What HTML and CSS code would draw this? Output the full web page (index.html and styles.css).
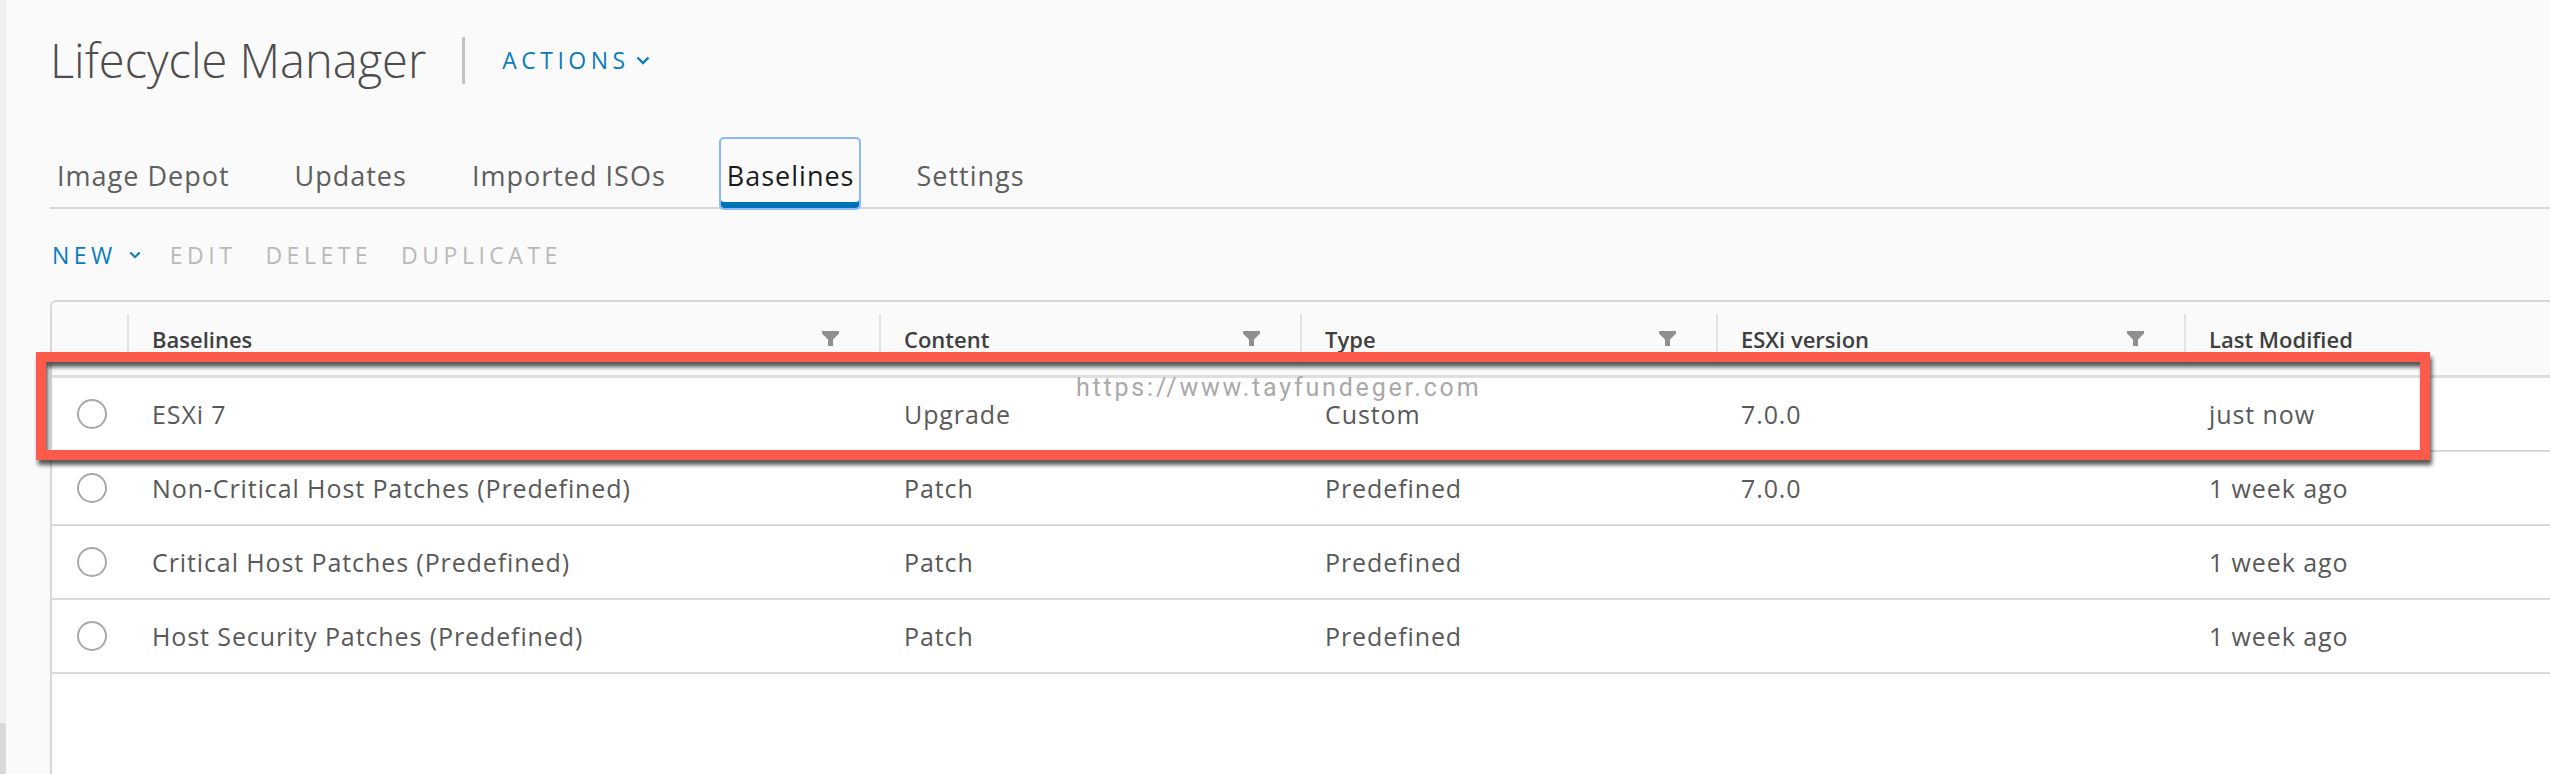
FILE: index.html
```html
<!DOCTYPE html>
<html lang="en">
<head>
<meta charset="utf-8">
<title>Lifecycle Manager</title>
<link rel="stylesheet" href="styles.css">
</head>
<body>
<div class="app">
  <div class="strip"><div class="strip-thumb"></div></div>
  <div class="main">
    <header class="page-header">
      <h1 class="title">Lifecycle Manager</h1>
      <span class="divider"></span>
      <span class="actions"><span>ACTIONS</span><svg class="chev" viewBox="0 0 14 9" width="14" height="9"><path d="M1.5 1.5 L7 7 L12.5 1.5" fill="none" stroke="currentColor" stroke-width="2.4"/></svg></span>
    </header>
    <nav class="tabs">
      <span class="tab">Image Depot</span>
      <span class="tab">Updates</span>
      <span class="tab">Imported ISOs</span>
      <span class="tab active">Baselines</span>
      <span class="tab">Settings</span>
    </nav>
    <div class="toolbar">
      <span class="btn primary"><span>NEW</span><svg class="chev small" viewBox="0 0 14 9" width="12" height="8"><path d="M1.5 1.5 L7 7 L12.5 1.5" fill="none" stroke="currentColor" stroke-width="2.4"/></svg></span>
      <span class="btn disabled">EDIT</span>
      <span class="btn disabled">DELETE</span>
      <span class="btn disabled">DUPLICATE</span>
    </div>
    <div class="grid">
      <div class="grid-head">
        <div class="hcell select"></div>
        <div class="hcell"><span>Baselines</span><svg class="filter" viewBox="0 0 17 15" width="17" height="15"><path d="M0 0 H17 V2.5 L11 8.5 V15 H6 V8.5 L0 2.5 Z"/></svg></div>
        <div class="hcell"><span>Content</span><svg class="filter" viewBox="0 0 17 15" width="17" height="15"><path d="M0 0 H17 V2.5 L11 8.5 V15 H6 V8.5 L0 2.5 Z"/></svg></div>
        <div class="hcell"><span>Type</span><svg class="filter" viewBox="0 0 17 15" width="17" height="15"><path d="M0 0 H17 V2.5 L11 8.5 V15 H6 V8.5 L0 2.5 Z"/></svg></div>
        <div class="hcell"><span>ESXi version</span><svg class="filter" viewBox="0 0 17 15" width="17" height="15"><path d="M0 0 H17 V2.5 L11 8.5 V15 H6 V8.5 L0 2.5 Z"/></svg></div>
        <div class="hcell"><span>Last Modified</span></div>
      </div>
      <div class="grid-row">
        <div class="cell select"><span class="radio"></span></div>
        <div class="cell">ESXi 7</div>
        <div class="cell">Upgrade</div>
        <div class="cell">Custom</div>
        <div class="cell">7.0.0</div>
        <div class="cell">just now</div>
      </div>
      <div class="grid-row">
        <div class="cell select"><span class="radio"></span></div>
        <div class="cell">Non-Critical Host Patches (Predefined)</div>
        <div class="cell">Patch</div>
        <div class="cell">Predefined</div>
        <div class="cell">7.0.0</div>
        <div class="cell">1 week ago</div>
      </div>
      <div class="grid-row">
        <div class="cell select"><span class="radio"></span></div>
        <div class="cell">Critical Host Patches (Predefined)</div>
        <div class="cell">Patch</div>
        <div class="cell">Predefined</div>
        <div class="cell"></div>
        <div class="cell">1 week ago</div>
      </div>
      <div class="grid-row">
        <div class="cell select"><span class="radio"></span></div>
        <div class="cell">Host Security Patches (Predefined)</div>
        <div class="cell">Patch</div>
        <div class="cell">Predefined</div>
        <div class="cell"></div>
        <div class="cell">1 week ago</div>
      </div>
    </div>
  </div>
  <div class="highlight"></div>
  <div class="watermark">https://www.tayfundeger.com</div>
</div>
</body>
</html>
```

FILE: styles.css
```css
* { box-sizing: border-box; }
html, body { margin: 0; padding: 0; }
body {
  background: #fafafa;
  font-family: "Open Sans", "Liberation Sans", sans-serif;
  color: #565656;
}
.app {
  position: relative;
  display: flex;
  height: 774px;
  overflow: hidden;
}
.strip {
  width: 6px;
  flex: none;
  background: #efefef;
  display: flex;
  flex-direction: column;
  justify-content: flex-end;
}
.strip-thumb { height: 51px; background: #d9d9d9; }
.main {
  flex: 1;
  display: flex;
  flex-direction: column;
  padding-left: 44px;
  min-width: 0;
}
.page-header {
  height: 120px;
  display: flex;
  align-items: center;
  flex: none;
}
.title {
  margin: 0;
  font-size: 47px;
  font-weight: 300;
  line-height: 1;
  color: #4d4d4d;
}
.divider {
  width: 3px;
  height: 47px;
  background: #c2c2c2;
  margin-left: 36px;
  margin-right: 37px;
}
.actions {
  display: flex;
  align-items: center;
  color: #0b7bbd;
  font-size: 23px;
  font-weight: 500;
  letter-spacing: 4.5px;
}
.chev { margin-left: 6px; }
.chev.small { margin-left: 12px; }
.tabs {
  margin-top: 17px;
  height: 72px;
  border-bottom: 2px solid #d6d6d6;
  display: flex;
  align-items: flex-start;
  gap: 45px;
  flex: none;
}
.tab {
  height: 70px;
  display: flex;
  align-items: center;
  padding: 6px 10px 0;
  font-size: 27px;
  letter-spacing: 1px;
  color: #5e5e5e;
}
.tab:first-child { padding-left: 7px; }
.tab.active {
  height: 73px;
  border: 2px solid #8cb9f5;
  border-radius: 5px;
  box-shadow: inset 0 -6px 0 #0072b8;
  color: #1b1b1b;
  position: relative;
  z-index: 1;
  padding: 4px 5px 0 6px;
  margin-left: -2px;
}
.toolbar {
  height: 91px;
  display: flex;
  align-items: center;
  gap: 29px;
  flex: none;
  padding-left: 2px;
}
.btn {
  display: flex;
  align-items: center;
  font-size: 23px;
  font-weight: 500;
  letter-spacing: 4.5px;
}
.btn.primary { color: #0b7bbd; }
.btn.disabled { color: #b9b9b9; }
.grid {
  flex: 1;
  background: #ffffff;
  border-top: 2px solid #d7d7d7;
  border-left: 2px solid #d7d7d7;
  border-top-left-radius: 6px;
  margin-right: -10px;
}
.grid-head, .grid-row {
  display: grid;
  grid-template-columns: 75px 752px 421px 416px 468px 1fr;
}
.grid-head {
  height: 76px;
  background: #fafafa;
  border-bottom: 3px solid #dedede;
  align-items: center;
  border-top-left-radius: 5px;
}
.hcell {
  height: 49px;
  display: flex;
  align-items: center;
  padding-left: 23px;
  border-left: 2px solid #e2e2e2;
  font-size: 22px;
  font-weight: 600;
  color: #3f3f3f;
}
.hcell.select { border-left: none; }
.filter {
  margin-left: auto;
  margin-right: 40px;
  fill: #8f8f8f;
}
.grid-row {
  height: 74px;
  border-bottom: 2px solid #d9d9d9;
  align-items: center;
}
.cell {
  padding-left: 25px;
  font-size: 25px;
  letter-spacing: 0.9px;
  color: #595959;
  white-space: nowrap;
}
.cell.select { padding-left: 25px; display: flex; }
.radio {
  width: 30px;
  height: 30px;
  border: 2px solid #a8a8a8;
  border-radius: 50%;
  background: #fff;
}
.highlight {
  position: absolute;
  left: 36px;
  top: 352px;
  width: 2394px;
  height: 108px;
  border: 10px solid #fd5a4b;
  filter: drop-shadow(2px 5px 2px rgba(0, 0, 0, 0.65));
  z-index: 5;
}
.watermark {
  position: absolute;
  left: 1076px;
  top: 373px;
  font-family: Roboto, "Open Sans", sans-serif;
  font-size: 25px;
  letter-spacing: 2.8px;
  color: #a9a9a9;
  z-index: 6;
}
```
